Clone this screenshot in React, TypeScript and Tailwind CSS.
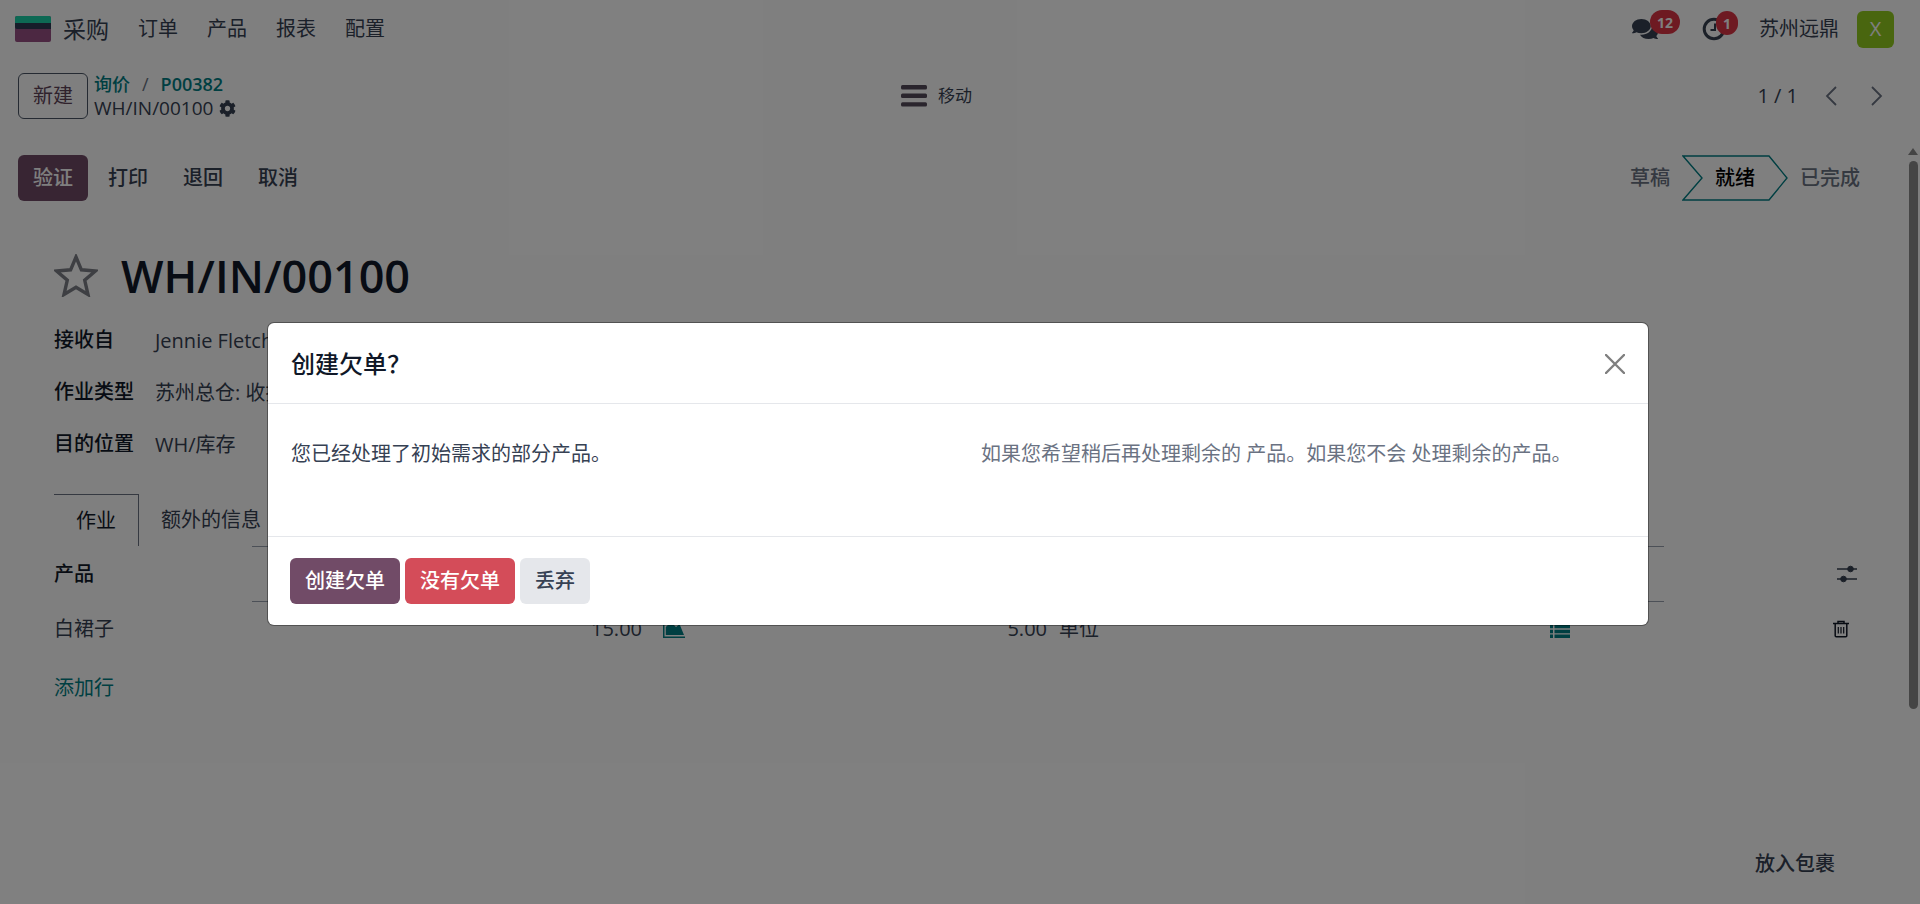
import { FaCog, FaComments } from "react-icons/fa";

const navItems = ["订单", "产品", "报表", "配置"];
const actions = ["打印", "退回", "取消"];
const fields = [
  { id: "partner", label: "接收自", value: "Jennie Fletcher" },
  { id: "type", label: "作业类型", value: "苏州总仓: 收据" },
  { id: "dest", label: "目的位置", value: "WH/库存" },
];

function ClockIcon() {
  return (
    <svg viewBox="0 0 24 24" className="size-6" fill="none" stroke="#374151" strokeWidth="3">
      <circle cx="12" cy="12" r="9.8" />
      <path d="M13 6.5v6.5H8.5" strokeWidth="2" />
    </svg>
  );
}

function TrashIcon() {
  return (
    <svg viewBox="0 0 16 18" className="h-[18px] w-4" fill="none" stroke="#111827" strokeWidth="1.5">
      <path d="M0 3.5h16M5 3V1.5h6V3M2.2 3.5v12.2q0 1 1 1h9.6q1 0 1-1V3.5" />
      <path d="M5.3 7v6.5M8 7v6.5M10.7 7v6.5" strokeWidth="1.2" />
    </svg>
  );
}

function SlidersIcon() {
  return (
    <svg viewBox="0 0 20 18" className="h-[18px] w-5" fill="#374151" stroke="#374151">
      <path d="M0 4h20M0 14h20" strokeWidth="1.4" />
      <circle cx="13.5" cy="4" r="2.8" />
      <circle cx="6.5" cy="14" r="2.8" />
    </svg>
  );
}

function ListIcon() {
  return (
    <svg viewBox="0 0 20 18" className="h-[18px] w-5" fill="#017e84">
      <path d="M0 0h3v3.400H0zM4.500 0H20v3.400H4.500zM0 4.900h3v3.400H0zM4.500 4.900H20v3.400H4.500zM0 9.800h3v3.400H0zM4.500 9.800H20v3.400H4.500zM0 14.600h3V18H0zM4.500 14.600H20V18H4.500z" />
    </svg>
  );
}

function AreaIcon() {
  return (
    <svg viewBox="0 0 24 18" className="h-[18px] w-6" fill="#017e84">
      <path d="M1 0h1.5v16.400H23V18H1z" />
      <path d="M3.800 15V7L9 2l5 5 3.500-3L22 15z" />
    </svg>
  );
}

function Navbar() {
  return (
    <header className="flex h-14 items-center pt-0.5 pl-[15px] pr-[26px]">
      <svg viewBox="0 0 36 26" className="h-[26px] w-9">
        <rect width="36" height="26" rx="2" fill="#985184" />
        <path d="M0 7h36v6H2q-2 0-2-2z" fill="#2d3a55" />
        <path d="M2 0h32q2 0 2 2v5H0V2q0-2 2-2z" fill="#1ad3a8" />
      </svg>
      <a href="#" className="ml-3 text-[23px] text-gray-700">采购</a>
      <nav className="ml-[29px] flex gap-[29px] text-xl text-gray-700">
        {navItems.map((item) => (
          <a key={item} href="#">{item}</a>
        ))}
      </nav>
      <div className="ml-auto flex items-center text-gray-700">
        <button className="relative mr-11" aria-label="消息">
          <FaComments className="size-[26px]" />
          <span className="absolute -top-1.5 left-[18px] flex h-6 w-[30px] items-center justify-center rounded-full bg-[#dc3545] text-[14px] font-bold text-white">
            12
          </span>
        </button>
        <button className="relative" aria-label="活动">
          <ClockIcon />
          <span className="absolute -top-1.5 left-[14px] flex h-6 w-[22px] items-center justify-center rounded-full bg-[#dc3545] text-[14px] font-bold text-white">
            1
          </span>
        </button>
        <button className="ml-[33px] text-xl">苏州远鼎</button>
        <span className="ml-[18px] flex size-[37px] items-center justify-center rounded-md bg-[#93cc1f] text-xl text-white">X</span>
      </div>
    </header>
  );
}

function ControlPanel() {
  return (
    <div className="flex h-20 items-center pl-[18px] pr-9">
      <div className="flex w-[47%] items-center gap-1.5">
        <button className="h-[46px] rounded-md border border-gray-600 px-[14px] text-xl text-[#5f4458]">新建</button>
        <div className="text-lg/6 text-gray-700">
          <div className="flex gap-3 text-[#017e84]">
            <a href="#" className="font-medium">询价</a>
            <span className="text-gray-500">/</span>
            <a href="#" className="font-semibold">P00382</a>
          </div>
          <div className="flex items-center gap-1.5 text-[19px]/6">
            WH/IN/00100
            <button aria-label="操作"><FaCog className="size-[17px]" /></button>
          </div>
        </div>
      </div>
      <button className="ml-1.5 flex items-center gap-[11px] text-[17px] text-gray-700">
        <svg viewBox="0 0 26 22" className="h-[22px] w-[26px]" fill="#544b5a">
          <rect width="26" height="4.4" rx="1.5" />
          <rect y="8.6" width="26" height="4.4" rx="1.5" />
          <rect y="17.2" width="26" height="4.4" rx="1.5" />
        </svg>
        移动
      </button>
      <div className="ml-auto flex items-center text-xl text-gray-700">
        1 / 1
        <button className="ml-[26px] px-px text-gray-500" aria-label="上一页">
          <svg viewBox="0 0 12 20" className="h-5 w-3" fill="none" stroke="currentColor" strokeWidth="1.8">
            <path d="M11 1 2 10l9 9" />
          </svg>
        </button>
        <button className="ml-8 px-px text-gray-500" aria-label="下一页">
          <svg viewBox="0 0 12 20" className="h-5 w-3" fill="none" stroke="currentColor" strokeWidth="1.8">
            <path d="m1 1 9 9-9 9" />
          </svg>
        </button>
      </div>
    </div>
  );
}

function StatusBar() {
  return (
    <div className="flex items-center justify-between pt-[19px] pl-[18px] pr-[60px] text-xl font-medium text-gray-700">
      <div className="flex gap-[5px]">
        <button className="h-[46px] rounded-md bg-[#714b67] px-[15px] text-white">验证</button>
        {actions.map((a) => (
          <button key={a} className="h-[46px] px-[15px]">{a}</button>
        ))}
      </div>
      <div className="flex items-center text-gray-500">
        <button>草稿</button>
        <button className="relative mx-3 h-[46px] w-[106px] text-black" aria-current="step">
          <svg viewBox="0 0 106 46" className="absolute inset-0 h-full w-full" fill="none" stroke="#017e84" strokeWidth="1.4">
            <path d="M1 1h86l18 22-18 22H1l19-22z" />
          </svg>
          就绪
        </button>
        <button>已完成</button>
      </div>
    </div>
  );
}

function Sheet() {
  return (
    <main className="pt-11 pl-[54px] pr-[60px] text-xl text-gray-700">
      <div className="flex h-[60px] items-center gap-[23px]">
        <button aria-label="收藏">
          <svg viewBox="0 0 44 43" className="h-[43px] w-11" fill="none" stroke="#7c7f86" strokeWidth="3.400">
            <path d="M22 3l5.400 12.800 14 1.200-10.700 9.100 3.300 14.400L22 33.200 10 40.500l3.300-14.400L2.600 17l14-1.200z" />
          </svg>
        </button>
        <h1 className="text-[45px] font-semibold text-gray-900">WH/IN/00100</h1>
      </div>
      <dl className="mt-[9px] mb-6">
        {fields.map((f) => (
          <div key={f.id} className="flex h-[52px] items-center">
            <dt className="w-[101px] font-medium text-gray-900">{f.label}</dt>
            <dd className="pt-0.5">{f.value}</dd>
          </div>
        ))}
      </dl>
      <div className="flex h-[52px]" role="tablist">
        <button role="tab" aria-selected="true" className="border-t border-r border-gray-500 px-[22px] text-gray-900">作业</button>
        <button role="tab" aria-selected="false" className="pl-[22px]">额外的信息</button>
      </div>
      <table className="w-full table-fixed border-separate border-spacing-0 text-left">
        <colgroup>
          <col className="w-[198px]" />
          <col className="w-[390px]" />
          <col className="w-[405px]" />
          <col />
          <col className="w-[196px]" />
        </colgroup>
        <thead>
          <tr className="h-14">
            <th className="font-medium text-gray-900">产品</th>
            <th className="border-y border-gray-400"></th>
            <th className="border-y border-gray-400"></th>
            <th className="border-y border-gray-400"></th>
            <th className="pr-[3px]">
              <button className="ml-auto block" aria-label="可选列"><SlidersIcon /></button>
            </th>
          </tr>
        </thead>
        <tbody>
          <tr className="h-[54px]">
            <td>白裙子</td>
            <td className="text-right">15.00</td>
            <td>
              <div className="flex items-center">
                <button className="ml-5" aria-label="预测"><AreaIcon /></button>
                <span className="ml-auto">5.00</span>
              </div>
            </td>
            <td>
              <div className="flex items-center pl-3">
                单位
                <button className="mr-[94px] ml-auto" aria-label="明细"><ListIcon /></button>
              </div>
            </td>
            <td className="pr-[11px]">
              <button className="ml-auto block" aria-label="删除"><TrashIcon /></button>
            </td>
          </tr>
          <tr className="h-16">
            <td colSpan={5}><a href="#" className="text-[#017e84]">添加行</a></td>
          </tr>
        </tbody>
      </table>
      <div className="mt-[130px] flex justify-end pr-[25px]">
        <button className="font-medium">放入包裹</button>
      </div>
    </main>
  );
}

function BackorderDialog() {
  return (
    <div className="absolute inset-0 flex items-start bg-black/50 px-[268px] pt-[323px]">
      <div role="dialog" aria-labelledby="dialog-title" className="mr-1 w-full rounded-md bg-white text-xl text-gray-700 shadow-[0_0_0_1px_rgba(0,0,0,0.35)]">
        <div className="flex h-[81px] items-center justify-between border-b border-gray-200 px-[23px] pt-0.5">
          <h2 id="dialog-title" className="text-2xl font-medium text-gray-900">创建欠单？</h2>
          <button aria-label="关闭">
            <svg viewBox="0 0 20 20" className="size-5" fill="none" stroke="#7f7f7f" strokeWidth="2.4" strokeLinecap="round">
              <path d="m1 1 18 18M19 1 1 19" />
            </svg>
          </button>
        </div>
        <div className="grid h-[133px] grid-cols-2 border-b border-gray-200 px-[23px] pt-9">
          <p>您已经处理了初始需求的部分产品。</p>
          <p className="pl-[23px] text-gray-500">如果您希望稍后再处理剩余的 产品。如果您不会 处理剩余的产品。</p>
        </div>
        <div className="flex gap-[5px] px-[22px] py-[21px] font-medium">
          <button className="h-[46px] rounded-md bg-[#714b67] px-[15px] text-white">创建欠单</button>
          <button className="h-[46px] rounded-md bg-[#d44c59] px-[15px] text-white">没有欠单</button>
          <button className="h-[46px] rounded-md bg-gray-200 px-[15px]">丢弃</button>
        </div>
      </div>
    </div>
  );
}

export default function App() {
  return (
    <div className="relative min-h-screen overflow-hidden bg-white font-['Open_Sans','Noto_Sans_CJK_SC',sans-serif]">
      <Navbar />
      <ControlPanel />
      <div className="relative">
        <StatusBar />
        <Sheet />
        <div className="absolute top-3 right-0.5 flex flex-col items-center gap-1.5">
          <svg viewBox="0 0 10 7" className="h-[7px] w-2.5" fill="#8b8b8b">
            <path d="M5 0l5 7H0z" />
          </svg>
          <div className="h-[548px] w-[9px] rounded-full bg-[#8b8b8b]" />
        </div>
      </div>
      <BackorderDialog />
    </div>
  );
}
